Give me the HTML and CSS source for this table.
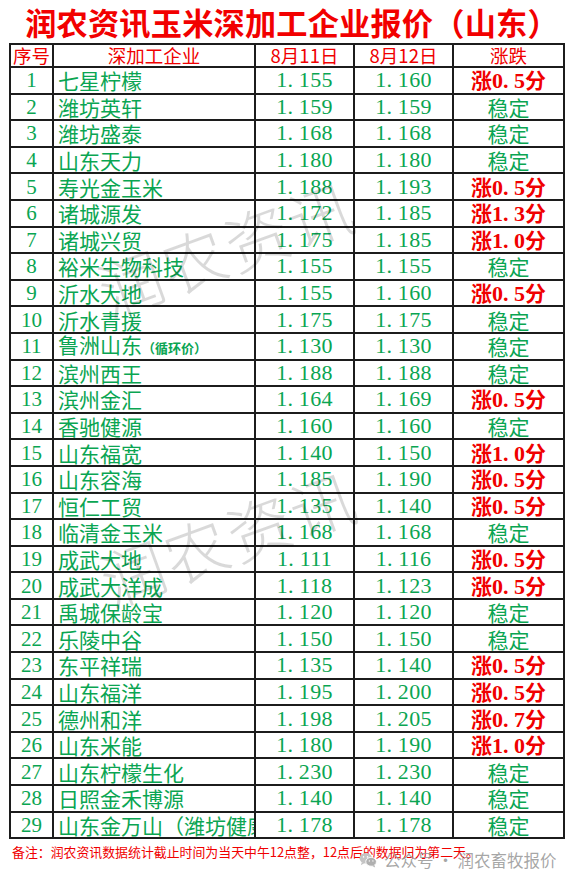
FILE: index.html
```html
<!DOCTYPE html>
<html lang="zh-CN">
<head>
<meta charset="utf-8">
<title>润农资讯玉米深加工企业报价（山东）</title>
<link rel="stylesheet" href="styles.css">
</head>
<body>
<h1 class="title">润农资讯玉米深加工企业报价（山东）</h1>
<table class="price">
  <colgroup>
    <col class="c-no"><col class="c-name"><col class="c-p"><col class="c-p"><col class="c-chg">
  </colgroup>
  <thead>
    <tr><th>序号</th><th>深加工企业</th><th>8月11日</th><th>8月12日</th><th>涨跌</th></tr>
  </thead>
  <tbody>
    <tr><td class="no">1</td><td class="name">七星柠檬</td><td class="num">1<i>.</i>155</td><td class="num">1<i>.</i>160</td><td class="up">涨<b>0<i>.</i>5</b>分</td></tr>
    <tr><td class="no">2</td><td class="name">潍坊英轩</td><td class="num">1<i>.</i>159</td><td class="num">1<i>.</i>159</td><td class="flat">稳定</td></tr>
    <tr><td class="no">3</td><td class="name">潍坊盛泰</td><td class="num">1<i>.</i>168</td><td class="num">1<i>.</i>168</td><td class="flat">稳定</td></tr>
    <tr><td class="no">4</td><td class="name">山东天力</td><td class="num">1<i>.</i>180</td><td class="num">1<i>.</i>180</td><td class="flat">稳定</td></tr>
    <tr><td class="no">5</td><td class="name">寿光金玉米</td><td class="num">1<i>.</i>188</td><td class="num">1<i>.</i>193</td><td class="up">涨<b>0<i>.</i>5</b>分</td></tr>
    <tr><td class="no">6</td><td class="name">诸城源发</td><td class="num">1<i>.</i>172</td><td class="num">1<i>.</i>185</td><td class="up">涨<b>1<i>.</i>3</b>分</td></tr>
    <tr><td class="no">7</td><td class="name">诸城兴贸</td><td class="num">1<i>.</i>175</td><td class="num">1<i>.</i>185</td><td class="up">涨<b>1<i>.</i>0</b>分</td></tr>
    <tr><td class="no">8</td><td class="name">裕米生物科技</td><td class="num">1<i>.</i>155</td><td class="num">1<i>.</i>155</td><td class="flat">稳定</td></tr>
    <tr><td class="no">9</td><td class="name">沂水大地</td><td class="num">1<i>.</i>155</td><td class="num">1<i>.</i>160</td><td class="up">涨<b>0<i>.</i>5</b>分</td></tr>
    <tr><td class="no">10</td><td class="name">沂水青援</td><td class="num">1<i>.</i>175</td><td class="num">1<i>.</i>175</td><td class="flat">稳定</td></tr>
    <tr><td class="no">11</td><td class="name">鲁洲山东<small>（循环价）</small></td><td class="num">1<i>.</i>130</td><td class="num">1<i>.</i>130</td><td class="flat">稳定</td></tr>
    <tr><td class="no">12</td><td class="name">滨州西王</td><td class="num">1<i>.</i>188</td><td class="num">1<i>.</i>188</td><td class="flat">稳定</td></tr>
    <tr><td class="no">13</td><td class="name">滨州金汇</td><td class="num">1<i>.</i>164</td><td class="num">1<i>.</i>169</td><td class="up">涨<b>0<i>.</i>5</b>分</td></tr>
    <tr><td class="no">14</td><td class="name">香驰健源</td><td class="num">1<i>.</i>160</td><td class="num">1<i>.</i>160</td><td class="flat">稳定</td></tr>
    <tr><td class="no">15</td><td class="name">山东福宽</td><td class="num">1<i>.</i>140</td><td class="num">1<i>.</i>150</td><td class="up">涨<b>1<i>.</i>0</b>分</td></tr>
    <tr><td class="no">16</td><td class="name">山东容海</td><td class="num">1<i>.</i>185</td><td class="num">1<i>.</i>190</td><td class="up">涨<b>0<i>.</i>5</b>分</td></tr>
    <tr><td class="no">17</td><td class="name">恒仁工贸</td><td class="num">1<i>.</i>135</td><td class="num">1<i>.</i>140</td><td class="up">涨<b>0<i>.</i>5</b>分</td></tr>
    <tr><td class="no">18</td><td class="name">临清金玉米</td><td class="num">1<i>.</i>168</td><td class="num">1<i>.</i>168</td><td class="flat">稳定</td></tr>
    <tr><td class="no">19</td><td class="name">成武大地</td><td class="num">1<i>.</i>111</td><td class="num">1<i>.</i>116</td><td class="up">涨<b>0<i>.</i>5</b>分</td></tr>
    <tr><td class="no">20</td><td class="name">成武大洋成</td><td class="num">1<i>.</i>118</td><td class="num">1<i>.</i>123</td><td class="up">涨<b>0<i>.</i>5</b>分</td></tr>
    <tr><td class="no">21</td><td class="name">禹城保龄宝</td><td class="num">1<i>.</i>120</td><td class="num">1<i>.</i>120</td><td class="flat">稳定</td></tr>
    <tr><td class="no">22</td><td class="name">乐陵中谷</td><td class="num">1<i>.</i>150</td><td class="num">1<i>.</i>150</td><td class="flat">稳定</td></tr>
    <tr><td class="no">23</td><td class="name">东平祥瑞</td><td class="num">1<i>.</i>135</td><td class="num">1<i>.</i>140</td><td class="up">涨<b>0<i>.</i>5</b>分</td></tr>
    <tr><td class="no">24</td><td class="name">山东福洋</td><td class="num">1<i>.</i>195</td><td class="num">1<i>.</i>200</td><td class="up">涨<b>0<i>.</i>5</b>分</td></tr>
    <tr><td class="no">25</td><td class="name">德州和洋</td><td class="num">1<i>.</i>198</td><td class="num">1<i>.</i>205</td><td class="up">涨<b>0<i>.</i>7</b>分</td></tr>
    <tr><td class="no">26</td><td class="name">山东米能</td><td class="num">1<i>.</i>180</td><td class="num">1<i>.</i>190</td><td class="up">涨<b>1<i>.</i>0</b>分</td></tr>
    <tr><td class="no">27</td><td class="name">山东柠檬生化</td><td class="num">1<i>.</i>230</td><td class="num">1<i>.</i>230</td><td class="flat">稳定</td></tr>
    <tr><td class="no">28</td><td class="name">日照金禾博源</td><td class="num">1<i>.</i>140</td><td class="num">1<i>.</i>140</td><td class="flat">稳定</td></tr>
    <tr><td class="no">29</td><td class="name">山东金万山（潍坊健康）</td><td class="num">1<i>.</i>178</td><td class="num">1<i>.</i>178</td><td class="flat">稳定</td></tr>
  </tbody>
</table>
<p class="note">备注：润农资讯数据统计截止时间为当天中午12点整，12点后的数据归为第二天。</p>
<div class="wm wm1">润农资讯</div>
<div class="wm wm2">润农资讯</div>
<div class="source">
  <svg class="wx" viewBox="0 0 20 18" width="18" height="16" aria-hidden="true">
    <ellipse cx="7.5" cy="7" rx="7" ry="6" fill="#c4c4c4"/>
    <path d="M3 11.5 L2 15 L6 12.5 Z" fill="#c4c4c4"/>
    <ellipse cx="13.5" cy="11" rx="6" ry="5" fill="#b0b0b0" stroke="#fff" stroke-width="1"/>
    <path d="M17 14.5 L18 17.5 L14.5 15.5 Z" fill="#b0b0b0"/>
    <circle cx="5" cy="5.5" r="0.9" fill="#fff"/>
    <circle cx="9.5" cy="5.5" r="0.9" fill="#fff"/>
    <circle cx="11.5" cy="10" r="0.8" fill="#fff"/>
    <circle cx="15.5" cy="10" r="0.8" fill="#fff"/>
  </svg>
  <span>公众号 · 润农畜牧报价</span>
</div>
</body>
</html>
```

FILE: styles.css
```css
html, body {
  margin: 0;
  padding: 0;
  background: #ffffff;
}

body {
  position: relative;
  width: 568px;
  height: 884px;
  overflow: hidden;
  font-family: "Noto Sans CJK SC", "Noto Sans", sans-serif;
}

.title {
  margin: 0;
  height: 43px;
  line-height: 43px;
  text-align: center;
  font-size: 31.2px;
  font-weight: 700;
  color: #f20000;
  padding-left: 16px;
  letter-spacing: 0.2px;
  white-space: nowrap;
}

.price {
  margin-left: 9px;
  width: 554px;
  border-collapse: collapse;
  table-layout: fixed;
}

.c-no { width: 43px; }
.c-name { width: 202px; }
.c-p { width: 99px; }
.c-chg { width: 111px; }

.price th,
.price td {
  border: 2px solid #1c1c1c;
  padding: 0;
  white-space: nowrap;
  text-align: center;
  vertical-align: middle;
}

.price th {
  height: 21px;
  line-height: 19px;
  font-size: 18.5px;
  font-weight: 400;
  color: #f00000;
}

.price td {
  height: 24.6px;
  line-height: 20px;
  color: #0aa552;
}

.price td.no {
  font-family: "Liberation Serif", serif;
  font-size: 21px;
}

.price td.name {
  text-align: left;
  padding-left: 4px;
  font-size: 21px;
  overflow: hidden;
  text-overflow: clip;
}

.price td.name small {
  font-size: 13px;
  font-weight: 700;
}

.price td.num {
  font-family: "Liberation Serif", serif;
  font-size: 22px;
  letter-spacing: 0.3px;
}

.price i {
  font-style: normal;
  padding-right: 0.25em;
}

.price td.flat {
  font-size: 21px;
}

.price td.up {
  color: #f00000;
  font-weight: 700;
  font-size: 21px;
}

.price td.up b {
  font-family: "Liberation Serif", serif;
  font-weight: 700;
  font-size: 22px;
}

.note {
  margin: 5px 0 0 12px;
  font-size: 12.9px;
  line-height: 16px;
  color: #f00000;
  white-space: nowrap;
}

.wm {
  position: absolute;
  font-size: 64px;
  line-height: 64px;
  font-weight: 300;
  letter-spacing: 3px;
  color: rgba(0, 0, 0, 0.15);
  white-space: nowrap;
  transform: rotate(-20deg);
  transform-origin: center center;
  pointer-events: none;
}

.wm1 { left: 92px; top: 214px; }
.wm2 { left: 94px; top: 504px; }

.source {
  position: absolute;
  left: 359px;
  top: 850px;
  display: flex;
  align-items: center;
  gap: 7px;
  font-size: 16.5px;
  line-height: 20px;
  color: rgba(150, 150, 150, 0.85);
}

.wx { display: block; }
```
